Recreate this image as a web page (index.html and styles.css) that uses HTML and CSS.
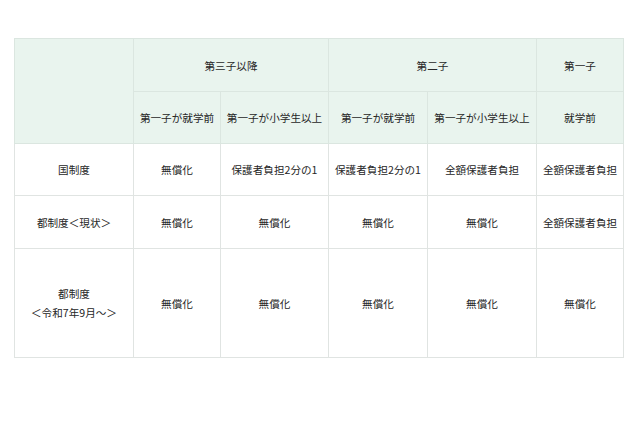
FILE: index.html
```html
<!DOCTYPE html>
<html lang="ja">
<head>
<meta charset="utf-8">
<link rel="stylesheet" href="styles.css">
</head>
<body>
<table class="tbl">
  <colgroup>
    <col class="c1"><col class="c2"><col class="c3"><col class="c4"><col class="c5"><col class="c6">
  </colgroup>
  <tr class="h1">
    <th rowspan="2"></th>
    <th colspan="2">第三子以降</th>
    <th colspan="2">第二子</th>
    <th>第一子</th>
  </tr>
  <tr class="h2">
    <th>第一子が就学前</th>
    <th>第一子が小学生以上</th>
    <th>第一子が就学前</th>
    <th>第一子が小学生以上</th>
    <th>就学前</th>
  </tr>
  <tr class="r1">
    <td>国制度</td>
    <td>無償化</td>
    <td>保護者負担2分の1</td>
    <td>保護者負担2分の1</td>
    <td>全額保護者負担</td>
    <td>全額保護者負担</td>
  </tr>
  <tr class="r2">
    <td>都制度＜現状＞</td>
    <td>無償化</td>
    <td>無償化</td>
    <td>無償化</td>
    <td>無償化</td>
    <td>全額保護者負担</td>
  </tr>
  <tr class="r3">
    <td class="two">都制度<br>＜令和7年9月～＞</td>
    <td>無償化</td>
    <td>無償化</td>
    <td>無償化</td>
    <td>無償化</td>
    <td>無償化</td>
  </tr>
</table>
</body>
</html>
```

FILE: styles.css
```css
html, body {
  margin: 0;
  padding: 0;
  background: #ffffff;
}
body {
  padding: 38px 0 0 14px;
  font-family: "Noto Sans CJK JP", "Noto Sans", sans-serif;
  color: #262626;
}
.tbl {
  border-collapse: collapse;
  table-layout: fixed;
  width: 609px;
  font-size: 10.6px;
}
.c1 { width: 119px; }
.c2 { width: 87px; }
.c3 { width: 108px; }
.c4 { width: 99px; }
.c5 { width: 109px; }
.c6 { width: 87px; }
.tbl th, .tbl td {
  border: 1px solid #e0e4e2;
  text-align: center;
  vertical-align: middle;
  padding: 0;
  font-weight: normal;
  white-space: nowrap;
  line-height: 19px;
}
.tbl th {
  background: #e9f4ee;
  border-color: #dbe6e0;
}
.h1 { height: 53px; }
.h2 { height: 52px; }
.r1 { height: 52px; }
.r2 { height: 53px; }
.r3 { height: 109px; }
.two {
  padding-top: 15px;
  line-height: 23px;
}
```
